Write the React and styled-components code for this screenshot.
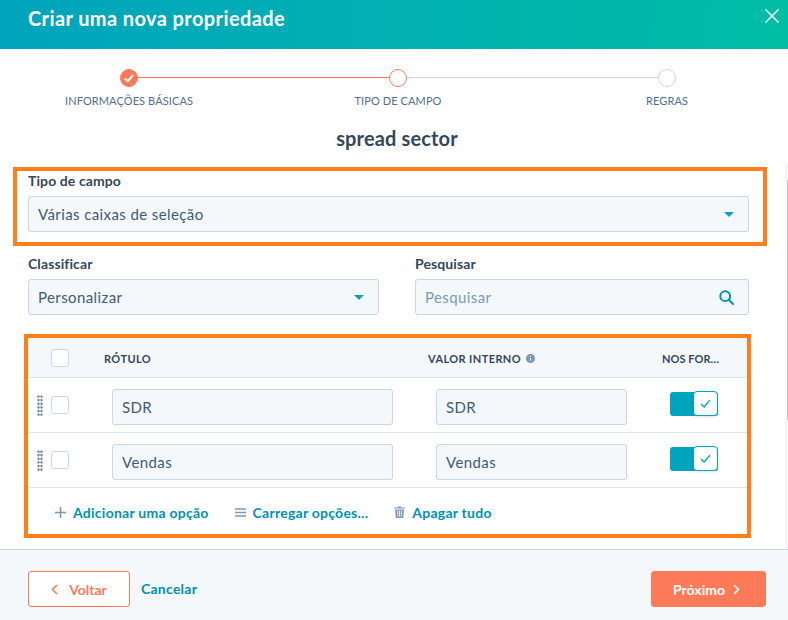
import React from "react";
import styled, { createGlobalStyle } from "styled-components";

const GlobalStyle = createGlobalStyle`
  html, body {
    margin: 0;
    padding: 0;
    background: #fff;
  }
  body {
    font-family: "Lato", "Noto Sans", sans-serif;
    color: #33475b;
  }
  * {
    box-sizing: border-box;
  }
`;

const Page = styled.div`
  width: 788px;
  height: 620px;
  display: flex;
  flex-direction: column;
  overflow: hidden;
`;

const Header = styled.header`
  height: 49px;
  flex: none;
  display: flex;
  align-items: flex-start;
  justify-content: space-between;
  padding: 9px 9px 0 28px;
  background: linear-gradient(95deg, #00a4bd 0%, #00bda5 100%);
  color: #fff;
`;

const Title = styled.h1`
  margin: -2px 0 0;
  font-size: 20px;
  line-height: 22px;
  font-weight: 700;
  letter-spacing: 0.4px;
`;

const Stepper = styled.div`
  display: flex;
  width: 556px;
  margin: 20px 0 0 120px;
  flex: none;
`;

const Step = styled.div`
  width: 18px;
  flex: none;
  display: flex;
  flex-direction: column;
  align-items: center;
`;

const Dot = styled.div`
  width: 18px;
  height: 18px;
  border-radius: 50%;
  display: flex;
  align-items: center;
  justify-content: center;
  border: 1px solid ${(p) => (p.$state === "todo" ? "#cbd6e2" : "#ff7a59")};
  background: ${(p) => (p.$state === "done" ? "#ff7a59" : "#fff")};
`;

const StepLine = styled.div`
  flex: 1;
  height: 1px;
  margin-top: 8px;
  background: ${(p) => (p.$active ? "#ff7a59" : "#cbd6e2")};
`;

const StepLabel = styled.div`
  margin-top: 7px;
  font-size: 11px;
  line-height: 14px;
  white-space: nowrap;
  color: #516f90;
  letter-spacing: 0.1px;
`;

const Heading = styled.h2`
  margin: 20px 0 1px;
  padding-left: 6px;
  height: 20px;
  flex: none;
  text-align: center;
  font-size: 20px;
  line-height: 20px;
  font-weight: 700;
  letter-spacing: 0.15px;
  color: #33475b;
`;

const Body = styled.div`
  flex: 1;
  position: relative;
  padding-top: 18px;
`;

const Track = styled.div`
  position: absolute;
  right: 0;
  top: 14px;
  bottom: 0;
  width: 3px;
  background: #f6f6f6;
`;

const Thumb = styled.div`
  position: absolute;
  right: 0;
  top: 31px;
  height: 240px;
  width: 1px;
  background: #c4c4c4;
`;

const Callout = styled.section`
  border: 4px solid #ff7f1a;
`;

const TypeBox = styled(Callout)`
  width: 754px;
  height: 79px;
  margin-left: 13px;
  padding: 2px 14px 0 11px;
`;

const FieldLabel = styled.div`
  height: 16px;
  margin-bottom: 7px;
  font-size: 14px;
  line-height: 16px;
  font-weight: 700;
  letter-spacing: 0.1px;
  color: #33475b;
`;

const InputShell = styled.div`
  height: 36px;
  display: flex;
  align-items: center;
  justify-content: space-between;
  padding: 0 14px 0 9px;
  background: #f5f8fa;
  border: 1px solid #cbd6e2;
  border-radius: 3px;
  font-size: 15px;
  letter-spacing: 0.4px;
  color: ${(p) => (p.$placeholder ? "#7c98b6" : "#425b76")};
`;

const Caret = styled.span`
  width: 0;
  height: 0;
  border-left: 5px solid transparent;
  border-right: 5px solid transparent;
  border-top: 5px solid #00a4bd;
`;

const FilterRow = styled.div`
  display: grid;
  grid-template-columns: 351px 334px;
  column-gap: 36px;
  margin: 10px 0 0 28px;
`;

const Field = styled.div`
  display: flex;
  flex-direction: column;
`;

const TableBox = styled(Callout)`
  width: 727px;
  height: 204px;
  margin: 19px 0 0 24px;
`;

const TableHead = styled.div`
  height: 40px;
  display: grid;
  grid-template-columns: 23px 18px 35px 324px 234px 1fr;
  align-items: center;
  background: #f5f8fa;
  border-bottom: 1px solid #dfe3eb;
  font-size: 11px;
  font-weight: 700;
  letter-spacing: ${(p) => (p.$tight ? "0" : "0.4px")};
  color: #33475b;
`;

const HeadCell = styled.div`
  grid-column: ${(p) => p.$col};
  display: flex;
  align-items: center;
  gap: 5px;
  padding-top: 2px;
  white-space: nowrap;
  letter-spacing: ${(p) => (p.$tight ? "0.05px" : "0.4px")};
`;

const Row = styled.div`
  height: 55px;
  display: grid;
  grid-template-columns: 9px 6px 8px 18px 43px 281px 43px 191px 43px 48px;
  align-items: center;
  border-bottom: 1px solid #dfe3eb;
`;

const HandleSlot = styled.div`
  grid-column: 2;
  display: flex;
`;

const Check = styled.div`
  width: 18px;
  height: 18px;
  border: 1px solid #cbd6e2;
  border-radius: 3px;
  background: #fff;
`;

const RowCheck = styled(Check)`
  grid-column: 4;
`;

const HeadCheck = styled(Check)`
  grid-column: 2;
`;

const RowInput = styled(InputShell)`
  grid-column: ${(p) => p.$col};
  margin-top: 4px;
`;

const Toggle = styled.div`
  grid-column: 10;
  position: relative;
  height: 24px;
  margin-top: -2px;
  background: #00a4bd;
  border-radius: 3px;
`;

const Knob = styled.div`
  position: absolute;
  right: 0;
  top: -1px;
  width: 25px;
  height: 25px;
  display: flex;
  align-items: center;
  justify-content: center;
  background: #fff;
  border: 1px solid #00a4bd;
  border-radius: 4px;
  box-shadow: 0 1px 3px rgba(0, 0, 0, 0.12);
`;

const Actions = styled.div`
  display: flex;
  align-items: center;
  height: 48px;
  padding-left: 27px;
  gap: 26px;
`;

const Action = styled.button`
  display: flex;
  align-items: center;
  gap: 7px;
  padding: 0;
  border: 0;
  background: none;
  font: inherit;
  font-size: 14px;
  font-weight: 700;
  letter-spacing: 0.25px;
  color: #0091ae;
`;

const Footer = styled.footer`
  height: 71px;
  flex: none;
  display: flex;
  align-items: flex-start;
  padding: 21px 22px 0 28px;
  background: #f5f8fa;
  border-top: 1px solid #cbd6e2;
`;

const BackButton = styled.button`
  width: 102px;
  height: 36px;
  display: flex;
  align-items: center;
  justify-content: center;
  gap: 11px;
  background: #fff;
  border: 1px solid #ff7a59;
  border-radius: 3px;
  font: inherit;
  font-size: 14px;
  font-weight: 700;
  color: #ff7a59;
`;

const CancelLink = styled.span`
  margin-left: 11px;
  line-height: 35px;
  font-size: 14px;
  font-weight: 700;
  letter-spacing: 0.25px;
  color: #0091ae;
`;

const NextButton = styled.button`
  width: 115px;
  height: 36px;
  margin-left: auto;
  padding: 0 4px 0 0;
  display: flex;
  align-items: center;
  justify-content: center;
  gap: 8px;
  background: #ff7a59;
  border: 1px solid #ff7a59;
  border-radius: 3px;
  font: inherit;
  font-size: 14px;
  font-weight: 700;
  color: #fff;
`;

const CloseIcon = () => (
  <svg width="14" height="14" viewBox="0 0 14 14" fill="none" stroke="#fff" strokeWidth="1.5">
    <path d="M0.5 0.5 13.5 13.5M13.5 0.5 0.5 13.5" />
  </svg>
);

const TickIcon = ({ size = 10, color = "#fff", width = 2 }) => (
  <svg width={size} height={size} viewBox="0 0 10 10" fill="none" stroke={color} strokeWidth={width}>
    <path d="M1 5.5 3.8 8.2 9 2" />
  </svg>
);

const SearchIcon = () => (
  <svg width="15" height="15" viewBox="0 0 15 15" fill="none" stroke="#0091ae" strokeWidth="2">
    <circle cx="6.2" cy="6.2" r="4.9" />
    <path d="M9.8 9.8 14 14" strokeLinecap="round" />
  </svg>
);

const InfoIcon = () => (
  <svg width="9" height="9" viewBox="0 0 9 9">
    <circle cx="4.5" cy="4.5" r="4.5" fill="#7c98b6" />
    <path d="M4.5 4v2.6M4.5 2v1" stroke="#fff" strokeWidth="1.1" />
  </svg>
);

const PlusIcon = () => (
  <svg width="11" height="11" viewBox="0 0 11 11" stroke="#7c98b6" strokeWidth="1.6">
    <path d="M5.5 0v11M0 5.5h11" />
  </svg>
);

const ListIcon = () => (
  <svg width="11" height="9" viewBox="0 0 11 9" stroke="#7c98b6" strokeWidth="1.5">
    <path d="M0 1h11M0 4.5h11M0 8h11" />
  </svg>
);

const TrashIcon = () => (
  <svg width="11" height="12" viewBox="0 0 11 12" fill="#7c98b6">
    <path d="M0 1.6h3.6L4.2.5h2.6l.6 1.1H11v1H0zM1 3.4h9L9.2 12H1.8zM3.2 4.6l.3 6.2h.7l-.2-6.2zM5.1 4.6v6.2h.8V4.6zM7 4.6l-.2 6.2h.7l.3-6.2z" fillRule="evenodd" />
  </svg>
);

const HandleIcon = () => (
  <svg width="6" height="21" viewBox="0 0 6 21" fill="#5f7d9c">
    {[0, 1, 2, 3, 4, 5].map((r) => (
      <React.Fragment key={r}>
        <rect x="0.5" y={r * 3.6 + 0.5} width="2" height="2.2" />
        <rect x="3.5" y={r * 3.6 + 0.5} width="2" height="2.2" />
      </React.Fragment>
    ))}
  </svg>
);

const Chevron = ({ left, color }) => (
  <svg width="7" height="11" viewBox="0 0 7 11" fill="none" stroke={color} strokeWidth="1.6">
    <path d={left ? "M6 1 1.5 5.5 6 10" : "M1 1 5.5 5.5 1 10"} />
  </svg>
);

const steps = [
  { label: "INFORMAÇÕES BÁSICAS", state: "done" },
  { label: "TIPO DE CAMPO", state: "current" },
  { label: "REGRAS", state: "todo" },
];

const options = ["SDR", "Vendas"];

export default function App() {
  return (
    <Page>
      <GlobalStyle />
      <Header>
        <Title>Criar uma nova propriedade</Title>
        <CloseIcon />
      </Header>

      <Stepper>
        {steps.map((step, i) => (
          <React.Fragment key={step.label}>
            {i > 0 && <StepLine $active={i === 1} />}
            <Step>
              <Dot $state={step.state}>
                {step.state === "done" && <TickIcon />}
              </Dot>
              <StepLabel>{step.label}</StepLabel>
            </Step>
          </React.Fragment>
        ))}
      </Stepper>

      <Heading>spread sector</Heading>

      <Body>
        <Track />
        <Thumb />
        <TypeBox>
          <FieldLabel>Tipo de campo</FieldLabel>
          <InputShell>
            Várias caixas de seleção
            <Caret />
          </InputShell>
        </TypeBox>

        <FilterRow>
          <Field>
            <FieldLabel>Classificar</FieldLabel>
            <InputShell>
              Personalizar
              <Caret />
            </InputShell>
          </Field>
          <Field>
            <FieldLabel>Pesquisar</FieldLabel>
            <InputShell $placeholder>
              Pesquisar
              <SearchIcon />
            </InputShell>
          </Field>
        </FilterRow>

        <TableBox>
          <TableHead>
            <HeadCheck />
            <HeadCell $col={4}>RÓTULO</HeadCell>
            <HeadCell $col={5}>
              VALOR INTERNO <InfoIcon />
            </HeadCell>
            <HeadCell $col={6} $tight>NOS FOR…</HeadCell>
          </TableHead>

          {options.map((option) => (
            <Row key={option}>
              <HandleSlot>
                <HandleIcon />
              </HandleSlot>
              <RowCheck />
              <RowInput $col={6}>{option}</RowInput>
              <RowInput $col={8}>{option}</RowInput>
              <Toggle>
                <Knob>
                  <TickIcon size={11} color="#00a4bd" width={1.2} />
                </Knob>
              </Toggle>
            </Row>
          ))}

          <Actions>
            <Action>
              <PlusIcon />
              Adicionar uma opção
            </Action>
            <Action>
              <ListIcon />
              Carregar opções...
            </Action>
            <Action>
              <TrashIcon />
              Apagar tudo
            </Action>
          </Actions>
        </TableBox>
      </Body>

      <Footer>
        <BackButton>
          <Chevron left color="#ff7a59" />
          Voltar
        </BackButton>
        <CancelLink>Cancelar</CancelLink>
        <NextButton>
          Próximo
          <Chevron color="#fff" />
        </NextButton>
      </Footer>
    </Page>
  );
}
